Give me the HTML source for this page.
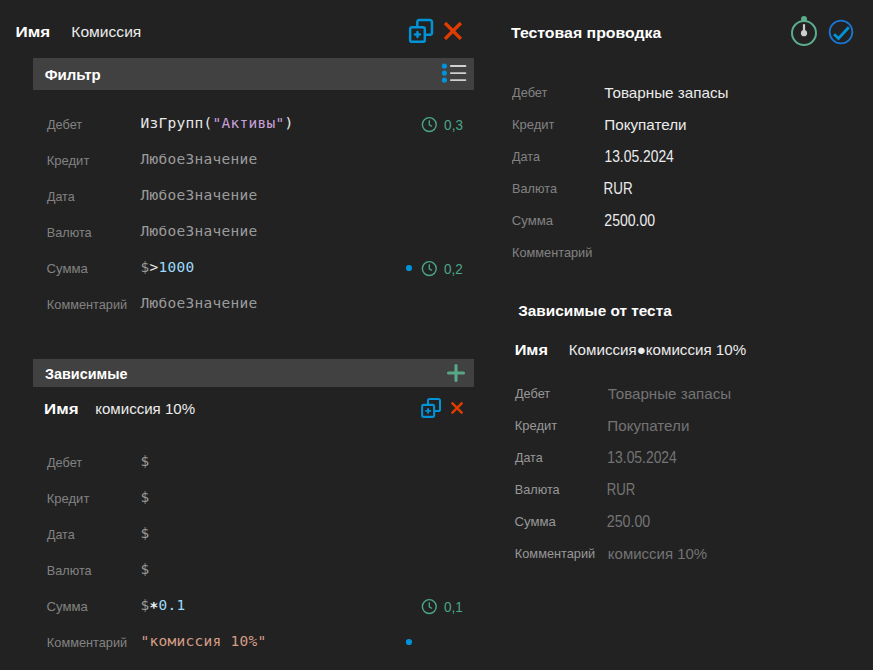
<!DOCTYPE html>
<html lang="ru">
<head>
<meta charset="utf-8">
<title>Правила проводок</title>
<style>
html,body{margin:0;padding:0;}
body{width:873px;height:670px;background:#222222;position:relative;overflow:hidden;font-family:"Liberation Sans", sans-serif;}
.t{position:absolute;white-space:nowrap;line-height:0;transform-origin:0 100%;}
.t::before{content:"";display:inline-block;height:20px;width:0;vertical-align:baseline;}
.i{position:absolute;left:0;top:0;display:block;overflow:visible;}
.hdr{position:absolute;background:#414141;}
.b{font-weight:bold;font-size:15px;color:#ffffff;}
.v{font-size:15px;color:#ececec;}
.d{color:#747474;}
.l{font-size:13.5px;color:#828282;}
.l2{font-size:13.5px;color:#989898;}
.m{font-family:"DejaVu Sans Mono", "Liberation Mono", monospace;font-size:14.5px;letter-spacing:0.27px;}
.c{font-size:15.5px;color:#4ba788;}
.g{color:#9b9b9b;}
.w{color:#e8e8e8;}
.p{color:#c8a0dc;}
.n{color:#9cdcfe;}
.s{color:#d69d85;}
.a{position:relative;top:2px;font-weight:bold;color:#f4f4f4;}
</style>
</head>
<body>
<div class="t b" style="left:15px;top:17px;transform:translateX(0.55px) scaleX(1.1327);">Имя</div>
<div class="t v" style="left:71px;top:17px;transform:translateX(0.34px) scaleX(1.0403);">Комиссия</div>
<div class="hdr" style="left:33px;top:58px;width:441px;height:32px;"></div>
<div class="t b" style="left:44px;top:60px;transform:translateX(0.70px) scaleX(1.0023);">Фильтр</div>
<div class="t l" style="left:46px;top:109px;transform:translateX(0.93px) scaleX(0.9435);">Дебет</div>
<div class="t m" style="left:140.6px;top:108px;"><span class="w">ИзГрупп(</span><span class="p">"Активы"</span><span class="w">)</span></div>
<div class="t l" style="left:46px;top:145px;transform:translateX(0.79px) scaleX(0.9629);">Кредит</div>
<div class="t m" style="left:140.6px;top:144px;"><span class="g">ЛюбоеЗначение</span></div>
<div class="t l" style="left:46px;top:181px;transform:translateX(0.99px) scaleX(0.9239);">Дата</div>
<div class="t m" style="left:140.6px;top:180px;"><span class="g">ЛюбоеЗначение</span></div>
<div class="t l" style="left:46px;top:217px;transform:translateX(0.78px) scaleX(0.9381);">Валюта</div>
<div class="t m" style="left:140.6px;top:216px;"><span class="g">ЛюбоеЗначение</span></div>
<div class="t l" style="left:46px;top:253px;transform:translateX(0.54px) scaleX(0.9728);">Сумма</div>
<div class="t m" style="left:140.6px;top:252px;"><span class="g">$</span><span class="w">&gt;</span><span class="n">1000</span></div>
<div class="t l" style="left:46px;top:289px;transform:translateX(0.86px) scaleX(0.9451);">Комментарий</div>
<div class="t m" style="left:140.6px;top:288px;"><span class="g">ЛюбоеЗначение</span></div>
<div class="t c" style="left:444px;top:110px;transform:translateX(0.12px) scaleX(0.8721);">0,3</div>
<div class="t c" style="left:444px;top:254px;transform:translateX(0.12px) scaleX(0.8702);">0,2</div>
<div class="hdr" style="left:33px;top:359px;width:441px;height:28px;"></div>
<div class="t b" style="left:45px;top:359px;transform:translateX(0.03px) scaleX(0.9577);">Зависимые</div>
<div class="t b" style="left:44px;top:394px;transform:translateX(0.12px) scaleX(1.1236);">Имя</div>
<div class="t v" style="left:95px;top:394px;transform:translateX(0.24px) scaleX(1.0039);">комиссия 10%</div>
<div class="t l" style="left:46px;top:447px;transform:translateX(0.93px) scaleX(0.9435);">Дебет</div>
<div class="t m" style="left:140.6px;top:446px;"><span class="g">$</span></div>
<div class="t l" style="left:46px;top:483px;transform:translateX(0.79px) scaleX(0.9629);">Кредит</div>
<div class="t m" style="left:140.6px;top:482px;"><span class="g">$</span></div>
<div class="t l" style="left:46px;top:519px;transform:translateX(0.99px) scaleX(0.9239);">Дата</div>
<div class="t m" style="left:140.6px;top:518px;"><span class="g">$</span></div>
<div class="t l" style="left:46px;top:555px;transform:translateX(0.78px) scaleX(0.9381);">Валюта</div>
<div class="t m" style="left:140.6px;top:554px;"><span class="g">$</span></div>
<div class="t l" style="left:46px;top:591px;transform:translateX(0.54px) scaleX(0.9728);">Сумма</div>
<div class="t m" style="left:140.6px;top:590px;"><span class="g">$</span><span class="w a">*</span><span class="n">0.1</span></div>
<div class="t l" style="left:46px;top:627px;transform:translateX(0.86px) scaleX(0.9451);">Комментарий</div>
<div class="t m" style="left:140.6px;top:626px;"><span class="s">"комиссия 10%"</span></div>
<div class="t c" style="left:444px;top:592px;transform:translateX(0.10px) scaleX(0.8714);">0,1</div>
<div class="t b" style="left:511px;top:18px;transform:translateX(0.00px) scaleX(1.0568);">Тестовая проводка</div>
<div class="t l" style="left:512px;top:77px;transform:translateX(0.00px) scaleX(0.9496);">Дебет</div>
<div class="t v" style="left:604px;top:78px;transform:translateX(0.31px) scaleX(1.0153);">Товарные запасы</div>
<div class="t l" style="left:511px;top:109px;transform:translateX(0.99px) scaleX(0.9601);">Кредит</div>
<div class="t v" style="left:604px;top:110px;transform:translateX(0.30px) scaleX(1.0131);">Покупатели</div>
<div class="t l" style="left:512px;top:141px;transform:translateX(0.00px) scaleX(0.9337);">Дата</div>
<div class="t v" style="left:604px;top:142px;font-size:16px;transform:translateX(0.43px) scaleX(0.8664);">13.05.2024</div>
<div class="t l" style="left:512px;top:173px;transform:translateX(0.05px) scaleX(0.9401);">Валюта</div>
<div class="t v" style="left:603px;top:174px;font-size:16px;transform:translateX(0.62px) scaleX(0.8365);">RUR</div>
<div class="t l" style="left:511px;top:205px;transform:translateX(0.75px) scaleX(0.9737);">Сумма</div>
<div class="t v" style="left:604px;top:206px;font-size:16px;transform:translateX(0.33px) scaleX(0.8789);">2500.00</div>
<div class="t l" style="left:512px;top:237px;transform:translateX(0.05px) scaleX(0.9445);">Комментарий</div>
<div class="t b" style="left:518px;top:296px;transform:translateX(0.16px) scaleX(1.0237);">Зависимые от теста</div>
<div class="t b" style="left:514px;top:335px;transform:translateX(0.63px) scaleX(1.0867);">Имя</div>
<div class="t v" style="left:568px;top:335px;transform:translateX(0.80px) scaleX(1.0086);">Комиссия●комиссия 10%</div>
<div class="t l2" style="left:514px;top:378px;transform:translateX(0.92px) scaleX(0.9443);">Дебет</div>
<div class="t v d" style="left:607px;top:379px;transform:translateX(0.71px) scaleX(1.0084);">Товарные запасы</div>
<div class="t l2" style="left:514px;top:410px;transform:translateX(0.77px) scaleX(0.9609);">Кредит</div>
<div class="t v d" style="left:607px;top:411px;transform:translateX(0.36px) scaleX(1.0101);">Покупатели</div>
<div class="t l2" style="left:514px;top:442px;transform:translateX(0.97px) scaleX(0.9252);">Дата</div>
<div class="t v d" style="left:607px;top:443px;font-size:16px;transform:translateX(0.37px) scaleX(0.8670);">13.05.2024</div>
<div class="t l2" style="left:514px;top:474px;transform:translateX(0.77px) scaleX(0.9398);">Валюта</div>
<div class="t v d" style="left:606px;top:475px;font-size:16px;transform:translateX(0.80px) scaleX(0.8217);">RUR</div>
<div class="t l2" style="left:514px;top:506px;transform:translateX(0.49px) scaleX(0.9744);">Сумма</div>
<div class="t v d" style="left:606px;top:507px;font-size:16px;transform:translateX(0.76px) scaleX(0.8895);">250.00</div>
<div class="t l2" style="left:514px;top:538px;transform:translateX(0.84px) scaleX(0.9450);">Комментарий</div>
<div class="t v d" style="left:607px;top:539px;transform:translateX(0.87px) scaleX(0.9976);">комиссия 10%</div>
<svg class="i" width="873" height="670" viewBox="0 0 873 670">
<g transform="translate(408.9 18.8)"><g fill="none" stroke="#0093d8" stroke-width="2.5" stroke-linejoin="round"><path d="M8.4 8.4V3.15a1.9 1.9 0 0 1 1.9 -1.9h10.85a1.9 1.9 0 0 1 1.9 1.9v10.85a1.9 1.9 0 0 1 -1.9 1.9H15.9"/><rect x="1.25" y="8.4" width="14.65" height="14.65" rx="1.9"/></g><path d="M8.575 13.225v5M6.075 15.725h5" stroke="#0093d8" stroke-width="2.4" stroke-linecap="round" fill="none"/></g>
<path d="M445.00 22.95L460.90 38.85M460.90 22.95L445.00 38.85" stroke="#e13c00" stroke-width="3.4" fill="none"/>
<circle cx="444.4" cy="66" r="2.6" fill="#0093d8"/><rect x="450" y="65.05" width="16.3" height="1.9" rx="0.8" fill="#d0d0d0"/>
<circle cx="444.4" cy="73.1" r="2.6" fill="#0093d8"/><rect x="450" y="72.15" width="16.3" height="1.9" rx="0.8" fill="#d0d0d0"/>
<circle cx="444.4" cy="80.1" r="2.6" fill="#0093d8"/><rect x="450" y="79.15" width="16.3" height="1.9" rx="0.8" fill="#d0d0d0"/>
<circle cx="429.3" cy="124.6" r="6.95" fill="none" stroke="#4ba788" stroke-width="1.4"/><path d="M429.3 120.3V124.8L432.1 126.5" fill="none" stroke="#4ba788" stroke-width="1.3"/>
<circle cx="429.3" cy="268.6" r="6.95" fill="none" stroke="#4ba788" stroke-width="1.4"/><path d="M429.3 264.3V268.8L432.1 270.5" fill="none" stroke="#4ba788" stroke-width="1.3"/>
<circle cx="409" cy="268" r="3.1" fill="#0093d8"/>
<path d="M456 365.5V380.5M448.5 373H463.5" stroke="#58a888" stroke-width="3.1" stroke-linecap="round" fill="none"/>
<g transform="translate(421.1 398) scale(0.81893)"><g fill="none" stroke="#0093d8" stroke-width="2.5" stroke-linejoin="round"><path d="M8.4 8.4V3.15a1.9 1.9 0 0 1 1.9 -1.9h10.85a1.9 1.9 0 0 1 1.9 1.9v10.85a1.9 1.9 0 0 1 -1.9 1.9H15.9"/><rect x="1.25" y="8.4" width="14.65" height="14.65" rx="1.9"/></g><path d="M8.575 13.225v5M6.075 15.725h5" stroke="#0093d8" stroke-width="2.3" stroke-linecap="round" fill="none"/></g>
<path d="M451.70 402.60L462.40 413.30M462.40 402.60L451.70 413.30" stroke="#e13c00" stroke-width="2.4" fill="none"/>
<circle cx="429.3" cy="606.6" r="6.95" fill="none" stroke="#4ba788" stroke-width="1.4"/><path d="M429.3 602.3V606.8L432.1 608.5" fill="none" stroke="#4ba788" stroke-width="1.3"/>
<circle cx="409" cy="642" r="3.1" fill="#0093d8"/>
<g transform="translate(790 16)"><circle cx="14" cy="17" r="12" fill="none" stroke="#5cac8d" stroke-width="2"/><circle cx="14" cy="3" r="3" fill="#5cac8d"/><path d="M14 8.2V17" stroke="#cdcdcd" stroke-width="2.2" fill="none"/><circle cx="14" cy="17.2" r="3.1" fill="#cdcdcd"/></g>
<g transform="translate(828 19)"><circle cx="13" cy="13" r="11.35" fill="none" stroke="#1976d2" stroke-width="1.8"/><path d="M6.1 15.2L10.5 19.5L20.8 8.3" fill="none" stroke="#0093d8" stroke-width="2.8"/></g>
</svg>
</body>
</html>
